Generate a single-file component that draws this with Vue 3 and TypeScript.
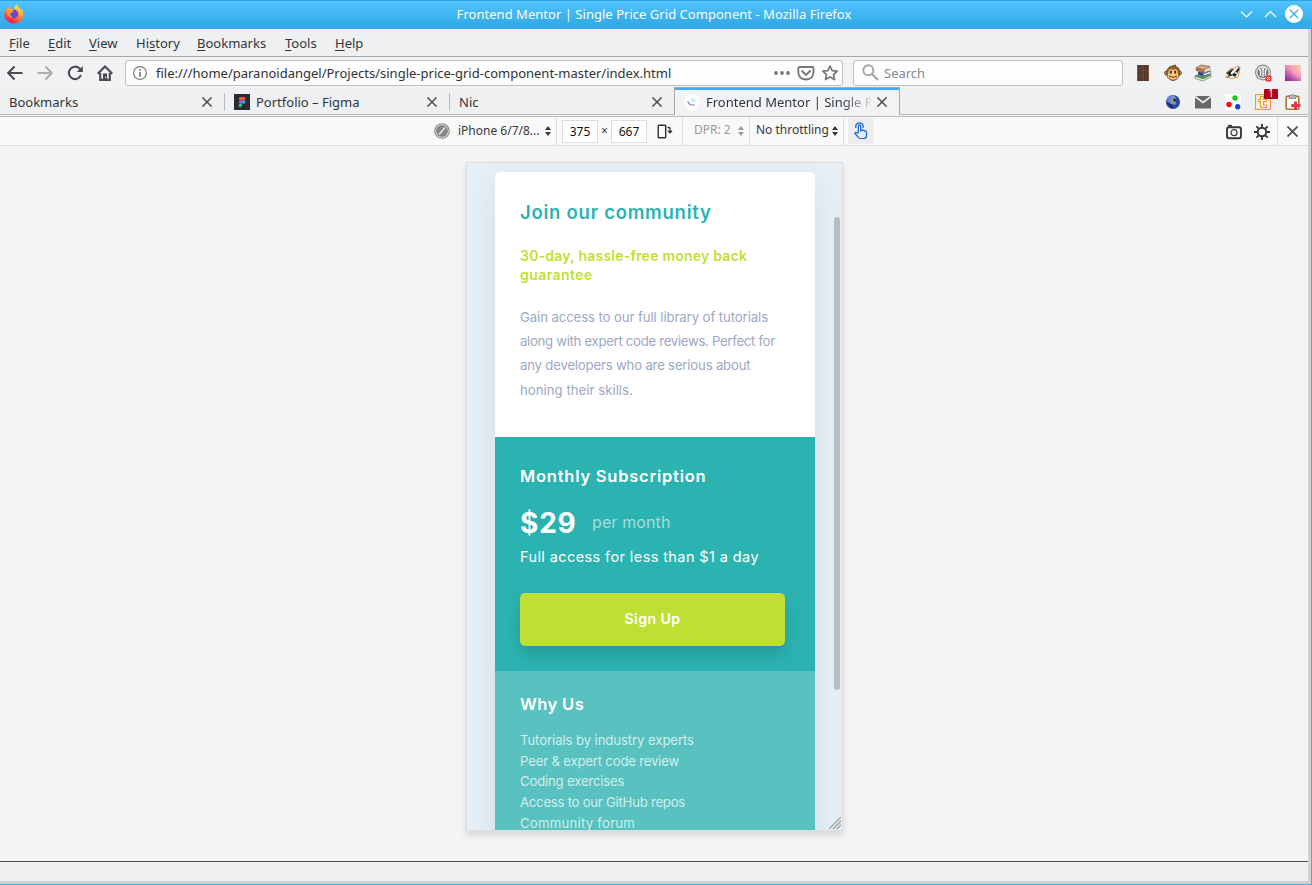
<script setup lang="ts">
interface MenuItem { before: string; key: string; after: string }
interface Tab { title: string; icon?: 'figma' | 'mentor'; active?: boolean }

const menu: MenuItem[] = [
  { before: '', key: 'F', after: 'ile' },
  { before: '', key: 'E', after: 'dit' },
  { before: '', key: 'V', after: 'iew' },
  { before: 'Hi', key: 's', after: 'tory' },
  { before: '', key: 'B', after: 'ookmarks' },
  { before: '', key: 'T', after: 'ools' },
  { before: '', key: 'H', after: 'elp' },
]
const tabs: Tab[] = [
  { title: 'Bookmarks' },
  { title: 'Portfolio – Figma', icon: 'figma' },
  { title: 'Nic' },
  { title: 'Frontend Mentor | Single P', icon: 'mentor', active: true },
]
const intro: string[] = [
  'Gain access to our full library of tutorials',
  'along with expert code reviews. Perfect for',
  'any developers who are serious about',
  'honing their skills.',
]
const reasons: string[] = [
  'Tutorials by industry experts',
  'Peer & expert code review',
  'Coding exercises',
  'Access to our GitHub repos',
  'Community forum',
]
</script>

<template>
  <div class="window">
    <header class="titlebar">
      <svg class="firefox" width="20" height="20" viewBox="0 0 20 20">
        <defs>
          <linearGradient id="fx" x1="0.8" y1="0" x2="0.3" y2="1">
            <stop offset="0" stop-color="#fff04a" /><stop offset="0.45" stop-color="#ff9a2a" />
            <stop offset="0.8" stop-color="#ff3a45" /><stop offset="1" stop-color="#f0146e" />
          </linearGradient>
        </defs>
        <path d="M12.5 0.3C13 2 15.500 3.500 16 5.500L17 4.800C19.500 7 20 11 18.500 14.200C16.500 18.500 12.500 20 8.800 19.500C4 19 0.300 15 0.300 10.500C0.300 8 1 6 2.300 4.300L3.500 5.500C4 4 5 3.200 6 2.800L6.500 5.200L10 5C10.500 3 11 1.300 12.500 0.300Z" fill="url(#fx)" />
        <circle cx="10" cy="10" r="4.300" fill="#6b45d8" />
        <path d="M3 5.800C5.500 5 8 5.500 9.500 7.300C8.500 8.700 7 8.400 6.300 9.600C5.800 11 7 12.500 8.600 12.800C6 14 3.500 12 3.300 9Z" fill="#ffa02b" />
      </svg>
      <span class="caption">Frontend Mentor | Single Price Grid Component - Mozilla Firefox</span>
      <svg class="controls" width="68" height="20" viewBox="0 0 68 20" fill="none" stroke="#fff" stroke-width="1.200">
        <path d="M5 7.500l5.500 5.500L16 7.500M29 13l5.500-5.500L40 13" />
        <circle cx="58" cy="10" r="9" fill="#fff" stroke="none" />
        <path d="M53.800 5.800l8.400 8.400M62.200 5.800l-8.400 8.400" stroke="#3aaee9" stroke-width="1.300" />
      </svg>
    </header>

    <div class="body">
      <nav class="menubar">
        <span v-for="m in menu" :key="m.key + m.after">{{ m.before }}<u>{{ m.key }}</u>{{ m.after }}</span>
      </nav>

      <div class="navbar">
        <div class="navicons">
          <svg viewBox="0 0 16 16" class="ic"><path d="M15.500 8H1.500M7.500 1.500L1.200 8l6.300 6.500" /></svg>
          <svg viewBox="0 0 16 16" class="ic dim"><path d="M.5 8h14M8.500 1.500L14.800 8l-6.300 6.500" /></svg>
          <svg viewBox="0 0 16 16" class="ic"><path d="M13.900 10a6.200 6.200 0 1 1-1.600-6.700L14 5" /><path d="M15.800 1v6H9.800z" fill="#4a4a4f" stroke="none" /></svg>
          <svg viewBox="0 0 16 16" class="ic"><path d="M.7 8.700L8 1.500l7.300 7.200M3.200 8v6.900h9.600V8" /><path d="M6 15V8.500h4V15zm2-3.200v1.200h1v-1.200z" fill="#4a4a4f" fill-rule="evenodd" stroke="none" /></svg>
        </div>
        <div class="field url">
          <svg width="14" height="14" viewBox="0 0 14 14"><circle cx="7" cy="7" r="6.400" fill="none" stroke="#77777b" stroke-width="1.100" /><path d="M7 3v1.800M7 6v4.800" stroke="#77777b" stroke-width="1.700" /></svg>
          <span class="address">file:///home/paranoidangel/Projects/single-price-grid-component-master/index.html</span>
          <svg class="url-actions" width="66" height="18" viewBox="0 0 66 18" fill="none" stroke="#76767a" stroke-width="1.800">
            <g fill="#76767a" stroke="none"><circle cx="3" cy="9" r="1.900" /><circle cx="9" cy="9" r="1.900" /><circle cx="15" cy="9" r="1.900" /></g>
            <path d="M26 3h13.500q1 0 1 1v4q0 7-7.500 7.500Q25.300 15 25.300 8V4q0-1 1-1z" /><path d="M29 7l4 4 4-4" stroke-linecap="round" />
            <path d="M57 2l2.200 4.600 5 .6-3.700 3.400 1 5-4.500-2.500-4.500 2.500 1-5-3.700-3.400 5-.6z" stroke-width="1.700" stroke-linejoin="round" />
          </svg>
        </div>
        <div class="field search">
          <svg width="17" height="17" viewBox="0 0 17 17" fill="none" stroke="#a5a5a8" stroke-width="1.900"><circle cx="6.300" cy="6.300" r="5" /><path d="M10 10l6 6" stroke-width="2.300" /></svg>
          <span>Search</span>
        </div>
        <div class="exts">
          <svg width="16" height="16" viewBox="0 0 16 16"><rect x="2" width="12" height="16" fill="#4b3936" /><path d="M5 0v16M11 0v16M2 5.300h12M2 10.600h12" stroke="#784f30" stroke-width=".5" /><path d="M2.500 0v16M8 0v16M13.500 0v16" stroke="#8b5727" stroke-width=".9" /></svg>
          <svg width="18" height="18" viewBox="0 0 18 18"><circle cx="2.600" cy="9" r="2" fill="#e0a559" stroke="#70451c" /><circle cx="15.400" cy="9" r="2" fill="#e0a559" stroke="#70451c" /><path d="M8 2l4-1-1 1.500 3 1C17 7 16 16 9 16.500 2 16 1 7 5 3.300z" fill="#9a602c" stroke="#5e3917" stroke-width=".8" /><path d="M9 6C6 4 3.700 7 4.500 9c-2.500 3 .5 6.700 4.500 6.700s7-3.700 4.500-6.700c.8-2-1.500-5-4.500-3z" fill="#f5c878" /><path d="M6.800 6.700v2.700M11.200 6.700v2.700" stroke="#262015" stroke-width="1.700" /><path d="M5 12q4 3 8 0" fill="none" stroke="#5b3517" /></svg>
          <svg width="18" height="18" viewBox="0 0 18 18"><path d="M1 12l9-3 7 2-9 5z" fill="#5d9560" stroke="#3d604a" stroke-width=".7" /><path d="M1 12v2.500l8 2.500 8-4v-2L9 15z" fill="#eee" stroke="#3d704a" stroke-width=".6" /><path d="M4 8l7-2 6 2-8 4z" fill="#5164aa" /><path d="M9 12v-2l8-3v2.500z" fill="#f4f4f4" stroke="#2b3869" stroke-width=".5" /><path d="M4 7.500v3L9 12v-2.500z" fill="#33448e" /><path d="M2 4l5-3 9 1.500L10 6z" fill="#dca982" stroke="#7d5234" stroke-width=".7" /><path d="M10 6l6-3v3l-6 3z" fill="#f3e4d0" stroke="#8c725b" stroke-width=".5" /><path d="M2 4v2.500L10 9V6z" fill="#b37e59" stroke="#7d5234" stroke-width=".5" /></svg>
          <svg width="18" height="18" viewBox="0 0 18 18"><path d="M1.500 13.500L4 10 2.500 8l4-3.500 4-.5 3.500-2 2 1-.5 4.500L14 13l-3 .5-3 1.500-2-1z" fill="#f1f1ef" stroke="#e0893d" stroke-width=".9" /><path d="M2 9.500l5-4 3.500-.5-3.200 3L10 9.500l5-6.500.5 2-2.500 5-2 3-2-1.500-3 .5-3 2 2-3.500z" fill="#222" /><path d="M6.500 9l3-3 3.500-1.500-3 3.500-2 3z" fill="#fff" /><circle cx="12" cy="9" r="1" fill="#fff" /></svg>
          <svg width="18" height="18" viewBox="0 0 18 18"><circle cx="9" cy="8.500" r="7.400" fill="#eee" stroke="#888" stroke-width="1.100" /><circle cx="9" cy="8.500" r="5.600" fill="#777" /><path d="M5.500 4.500C6.500 6 7 8 6.500 12M12.500 4.500C11.500 6 11 8 11.500 12M7.500 3l1.500 3 1.500-3M9 6v7" stroke="#f3f3f3" stroke-width="1.400" fill="none" /><rect x="11.500" y="11.500" width="6" height="6" rx="1" fill="#ea3439" /><path d="M13 13l3 3m0-3l-3 3" stroke="#fff" /></svg>
          <div class="swatch"></div>
        </div>
      </div>

      <div class="tabstrip">
        <div v-for="t in tabs" :key="t.title" class="tab" :class="{ active: t.active }">
          <svg v-if="t.icon === 'figma'" width="16" height="16" viewBox="0 0 16 16"><rect width="16" height="16" fill="#292a32" /><path d="M8 3H6.500a1.700 1.700 0 0 0 0 3.400H8zM8 3h1.800a1.700 1.700 0 0 1 0 3.400H8z" fill="#f45436" /><path d="M8 6.400H6.500a1.700 1.700 0 0 0 0 3.400H8z" fill="#a459ff" /><circle cx="9.700" cy="8.100" r="1.700" fill="#24b9fa" /><path d="M8 9.800H6.500a1.700 1.700 0 1 0 1.500 1.700z" fill="#12cf83" /></svg>
          <svg v-if="t.icon === 'mentor'" width="16" height="16" viewBox="0 0 16 16"><circle cx="8" cy="8" r="8" fill="#fff" /><path d="M3.700 7q1.500 5 6.800 4" fill="none" stroke="#9897cf" stroke-width="1.300" /><path d="M8.200 4v4M11.500 5L9.500 6.500l2 1.500" fill="none" stroke="#8ed6df" stroke-width="1" /></svg>
          <span class="tab-title">{{ t.title }}</span>
          <svg class="close" width="10" height="10" viewBox="0 0 10 10"><path d="M.4.4l9.200 9.200M9.600.4L.4 9.600" /></svg>
        </div>
        <div class="exts lower">
          <svg width="16" height="16" viewBox="0 0 16 16"><circle cx="8" cy="8" r="7" fill="#2945a3" /><circle cx="6.500" cy="5.500" r="4.500" fill="#7d9be0" opacity=".75" /><path d="M7 4l2-1.500L11.500 5l-1 1.500H8.500l3 2.500-2 2.500L7 9 5.500 7z" fill="#a8a878" opacity=".75" /><path d="M2 9q3 .5 5 5M9.500 4.500v3M8 6h3" stroke="#14246c" stroke-width="1.400" fill="none" /></svg>
          <svg width="16" height="14" viewBox="0 0 16 14"><rect y="1" width="16" height="12.500" rx=".6" fill="#68686b" /><path d="M0 1.500l8 6 8-6" fill="none" stroke="#eff0f2" stroke-width="1.600" /></svg>
          <svg width="16" height="16" viewBox="0 0 16 16"><rect width="16" height="16" fill="#fff" /><circle cx="10" cy="4" r="2.700" fill="#12cb17" /><circle cx="4" cy="10.500" r="2.700" fill="#ed1117" /><circle cx="12.700" cy="12.700" r="2.700" fill="#1642cc" /></svg>
          <div class="totp">
            <svg width="16" height="16" viewBox="0 0 16 16" fill="none" stroke="#f79a1a"><rect x=".5" y=".5" width="15" height="15" stroke-width="1.200" /><path d="M5.500 2.500h3v3h3v2h-3v3.500h3v2.500h-4q-2 0-2-2V7.500h-2v-2h2z" fill="#fff6e6" stroke-width="1.100" /></svg>
            <span class="count">1</span>
          </div>
          <svg width="16" height="16" viewBox="0 0 16 16"><rect x="1.200" y="2.200" width="12.600" height="13" rx="1" fill="#fff" stroke="#a37835" stroke-width="1.600" /><path d="M4 1.500h2l1.500-1.300L9 1.500h2v3H4z" fill="#b5b8b4" stroke="#777a76" stroke-width=".8" /><path d="M9 7.500h3V10h3.500v3H12v2.700H9V13H6.200v-3H9z" fill="#e9374b" /></svg>
        </div>
      </div>

      <div class="devbar">
        <div class="agent"><svg width="16" height="16" viewBox="0 0 16 16"><circle cx="8" cy="8" r="7.300" fill="#eee" stroke="#858585" stroke-width="1.100" /><circle cx="8" cy="8" r="6" fill="#858585" /><path d="M5 11.500L11 4.500" stroke="#eee" stroke-width="1.300" /></svg></div>
        <div class="model"><span>iPhone 6/7/8...</span><i class="updown"></i></div>
        <div class="dims"><span class="num">375</span><span class="times">×</span><span class="num">667</span></div>
        <div class="rotate"><svg width="16" height="16" viewBox="0 0 16 16" fill="none" stroke="#303034" stroke-width="1.400"><rect x="1.200" y="2.200" width="7.500" height="12.600" rx=".8" /><path d="M10.500 4.500h1.500q1 0 1 1V9M11 7.800l2 2 2-2" stroke-width="1.300" /></svg></div>
        <div class="dpr"><span>DPR: 2</span><i class="updown"></i></div>
        <div class="throttle"><span>No throttling</span><i class="updown"></i></div>
        <div class="touch"><span class="touchbtn"><svg width="16" height="18" viewBox="0 0 16 18" fill="none" stroke="#0b60df" stroke-width="1.200" stroke-linejoin="round"><path d="M5.300 11V4q0-1.200 1.200-1.200T7.700 4v5.200-1q1-1 2.200.4 1.200-.8 2 .5 1.600-.4 1.600 1.200v3.200q0 3-2.500 3H7.200Q6 16.500 5 15L2 11.700q0-1.700 1.800-.8z" /><path d="M3 6q-1-3 1.300-4.500Q6.500.2 8.700 1.500 10.800 3 10 6" /></svg></span></div>
        <div class="devactions">
          <svg width="18" height="16" viewBox="0 0 18 16" fill="none" stroke="#38383b"><rect x="2" y="3.200" width="14" height="11" rx="2" stroke-width="1.900" /><path d="M3 1.800h4" stroke-width="1.800" /><circle cx="9" cy="8.700" r="3" stroke-width="1.200" /></svg>
          <svg width="16" height="16" viewBox="0 0 16 16" fill="none" stroke="#38383b"><circle cx="8" cy="8" r="4.200" stroke-width="2" /><path d="M8 0v3.500M8 12.500V16M0 8h3.500M12.500 8H16M2.400 2.400l2.200 2.200M11.400 11.400l2.200 2.200M13.600 2.400l-2.200 2.200M4.600 11.400l-2.200 2.200" stroke-width="1.900" /></svg>
        </div>
        <div class="devclose"><svg class="close" width="11" height="11" viewBox="0 0 10 10"><path d="M.4.4l9.200 9.200M9.600.4L.4 9.600" /></svg></div>
      </div>

      <main class="stage">
        <div class="device">
          <article class="card">
            <section class="join">
              <h1>Join our community</h1>
              <h2><span>30-day, hassle-free money back</span><span>guarantee</span></h2>
              <p><span v-for="line in intro" :key="line">{{ line }}</span></p>
            </section>
            <section class="monthly">
              <h3>Monthly Subscription</h3>
              <div class="price"><strong>$29</strong><span>per month</span></div>
              <p>Full access for less than $1 a day</p>
              <button type="button">Sign Up</button>
            </section>
            <section class="why">
              <h3>Why Us</h3>
              <ul><li v-for="r in reasons" :key="r">{{ r }}</li></ul>
            </section>
          </article>
          <div class="thumb"></div>
          <svg class="grip" width="12" height="12" viewBox="0 0 12 12"><path d="M0 12L12 0M4 12l8-8M8 12l4-4" stroke="#929699" stroke-width="1.200" /></svg>
        </div>
      </main>
      <footer class="statusbar"></footer>
    </div>
  </div>
</template>

<style>
body { margin: 0; overflow: hidden; }
</style>

<style scoped>
* { box-sizing: border-box; }
svg { display: block; flex: none; }
.window { width: 1312px; height: 885px; display: flex; flex-direction: column; background: #3daee9; font: 13px/18px "Noto Sans", sans-serif; color: #31363b; }
.titlebar { height: 29px; flex: none; display: grid; grid-template-columns: 72px 1fr 72px; align-items: center; padding-bottom: 1px; background: linear-gradient(#2aa4e1 0 1px, #52c4ff 1px, #34abe6 24px, #34abe6); color: #fcfcfc; }
.firefox { margin-left: 4px; }
.caption { text-align: center; white-space: nowrap; margin-left: -4px; letter-spacing: .03px; }
.controls { margin-left: -4px; }
.body { flex: 1; min-height: 0; display: flex; flex-direction: column; margin-right: 1px; margin-bottom: 1px; border-right: 3px solid #d3d0cd; border-bottom: 3px solid #d3d0cd; background: #eff0f2; }
.menubar { height: 28px; flex: none; display: grid; grid-template-columns: 39px 41px 47px 61px 88px 50px 60px; align-items: center; padding: 1px 0 0 9px; border-bottom: 1px solid #a8a8ac; white-space: nowrap; }
.menubar u { text-underline-offset: 2px; text-decoration-thickness: 1px; }
.navbar { height: 31px; flex: none; display: flex; align-items: center; background: #f1f2f4; }
.navicons { width: 125px; display: flex; gap: 14px; padding-left: 7px; }
.ic { width: 16px; height: 16px; fill: none; stroke: #4a4a4f; stroke-width: 2.100; }
.dim { opacity: .4; }
.field { height: 26px; display: flex; align-items: center; background: #fdfdfd; border: 1px solid #bdbfc1; border-radius: 3px; white-space: nowrap; }
.url { width: 718px; padding: 0 3px 0 7px; margin-right: 10px; }
.address { flex: 1; margin-left: 9px; color: #303235; }
.search { width: 270px; padding-left: 8px; color: #88898b; }
.search span { margin-left: 5px; }
.exts { margin-left: auto; display: grid; grid-auto-flow: column; grid-auto-columns: 30px; place-items: center; }
.swatch { width: 16px; height: 16px; background: radial-gradient(circle at 100% 20%, #ffcfb8cc, transparent 60%), linear-gradient(35deg, #86139e, #f18cb9 55%, #ffb0a5); }
.tabstrip { height: 27px; flex: none; display: flex; align-items: stretch; margin-bottom: 1px; border-bottom: 1px solid #bbbcbe; }
.tab { width: 225px; display: flex; align-items: center; padding: 2px 13px 0 9px; background: linear-gradient(#b8babc, #b8babc) right 0 bottom 3px / 1px 18px no-repeat; }
.tab:nth-child(3) { background: none; width: 224px; padding-right: 12px; }
.tab > svg:first-child { margin-right: 6px; }
.tab-title { flex: 1; min-width: 0; white-space: nowrap; }
.close { fill: none; stroke: #4c4c50; stroke-width: 1.500; }
.tab.active { width: 226px; margin-bottom: -1px; padding: 1px 12px 0 9px; background: #f2f3f5; border: solid #a8aaad; border-width: 0 1px; box-shadow: inset 0 2px #3daee9, 0 -1px #a8a8a4; }
.active .tab-title { margin-right: 6px; mask-image: linear-gradient(90deg, #000 135px, transparent 170px); }
.lower { align-items: center; padding-top: 2px; }
.totp { position: relative; }
.count { position: absolute; left: 9px; top: -5px; width: 14px; height: 10px; border-radius: 1px; background: #b20019; color: #fff; text-align: center; font-size: 10px; line-height: 8px; }
.devbar { height: 30px; flex: none; display: grid; grid-template-columns: 457px 100px 90px 36px 67px 94px 32px 1fr 30px; align-items: stretch; border-top: 1px solid #bcbdbf; border-bottom: 1px solid #e0e0e1; background: #f9f9fa; color: #38383d; font-size: 12px; white-space: nowrap; }
.devbar > div { display: flex; align-items: center; }
.agent { justify-content: flex-end; padding-right: 7px; }
.model, .rotate, .dpr, .throttle { border-right: 1px solid #dfdfe1; }
.model { padding-left: 1px; justify-content: space-between; padding-right: 5px; }
.dims { padding-left: 5px; }
.num { width: 36px; height: 23px; border: 1px solid #dedee0; text-align: center; line-height: 21px; color: #111; background: #fff; }
.times { width: 13px; text-align: center; }
.rotate { padding-left: 10px; }
.dpr { padding: 0 5px 2px 11px; justify-content: space-between; color: #98989c; }
.throttle { padding: 0 5px 2px 6px; justify-content: space-between; }
.dpr .updown, .throttle .updown { margin-top: 2px; }
.updown { display: flex; flex-direction: column; gap: 2px; }
.updown::before, .updown::after { content: ""; border: 3px solid transparent; }
.updown::before { border-top: 0; border-bottom: 4px solid currentColor; }
.updown::after { border-bottom: 0; border-top: 4px solid currentColor; }
.touchbtn { width: 26px; height: 26px; margin-left: 4px; display: grid; place-items: center; border-radius: 2px; background: #ededf0; }
.devactions { justify-content: flex-end; gap: 11px; padding: 1px 7px 0 0; border-right: 1px solid #dfdfe1; }
.devclose { justify-content: center; padding: 1px 1px 0 0; }
.stage { flex: 1; min-height: 0; display: flex; padding: 16px 0 0 466px; background: #f4f4f5; }
.device { position: relative; width: 377px; height: 669px; overflow: hidden; padding: 9px 27px 0 28px; border: 1px solid #dcdddf; background: #e6eff6; box-shadow: 0 4px 7px #0000001f; font-family: Inter, sans-serif; }
.card { width: 320px; border-radius: 5px; box-shadow: 0 15px 28px #7a829c26; }
.card h1, .card h2, .card h3, .card p, .card ul { margin: 0; padding: 0; list-style: none; }
.join { height: 265px; padding: 28px 25px 0; border-radius: 5px 5px 0 0; background: #fff; white-space: nowrap; }
.join span { display: block; }
.join h1 { color: #2bb3b1; font-size: 18.5px; line-height: 24px; font-weight: 600; letter-spacing: .75px; }
.join h2 { margin-top: 22px; color: #bfdf34; font-size: 14px; line-height: 19px; font-weight: 600; letter-spacing: .23px; }
.join h2 span:last-child { letter-spacing: .45px; }
.join p { margin-top: 21px; color: #9ba8c2; font-size: 13.2px; line-height: 24.2px; letter-spacing: -.1px; }
.join p span:nth-child(2) { letter-spacing: -.31px; }
.join p span:nth-child(3) { letter-spacing: -.2px; }
.join p span:nth-child(4) { letter-spacing: .02px; }
.monthly { height: 234px; padding: 27px 30px 0 25px; background: #2bb3b1; color: #fff; white-space: nowrap; }
.card h3 { font-size: 16.500px; line-height: 24px; font-weight: 600; letter-spacing: .77px; }
.price { height: 40px; margin-top: 14px; display: flex; align-items: center; }
.price strong { width: 72px; padding-top: 2px; font-size: 28px; line-height: 38px; font-weight: 700; letter-spacing: .8px; }
.price span { color: #a5dcdc; font-size: 16px; letter-spacing: .12px; }
.monthly p { margin-top: 3px; font-size: 14.500px; line-height: 24px; letter-spacing: .4px; }
.monthly button { display: block; width: 265px; height: 53px; margin-top: 24px; padding: 0 0 2px; border: 0; border-radius: 5px; background: #bfdf34; color: #fff; font: 600 14.200px/51px Inter, sans-serif; letter-spacing: .4px; box-shadow: 0 8px 16px #00000026; }
.why { height: 200px; padding: 21px 25px 0; background: #59c1bf; color: #fff; white-space: nowrap; }
.card .why h3 { letter-spacing: .4px; }
.why ul { margin-top: 14px; color: #d0eeed; font-size: 13.200px; line-height: 20.700px; letter-spacing: -.2px; }
.why li:first-child { letter-spacing: -.11px; }
.why li:nth-child(4) { letter-spacing: -.26px; }
.why li:nth-child(5) { letter-spacing: .22px; }
.thumb { position: absolute; left: 367px; top: 54px; width: 6px; height: 473px; border-radius: 3px; background: #b5bec5; }
.grip { position: absolute; right: 1px; bottom: 1px; }
.statusbar { height: 20px; flex: none; border-top: 1px solid #4c4d4e; background: #eff0f2; }
</style>
